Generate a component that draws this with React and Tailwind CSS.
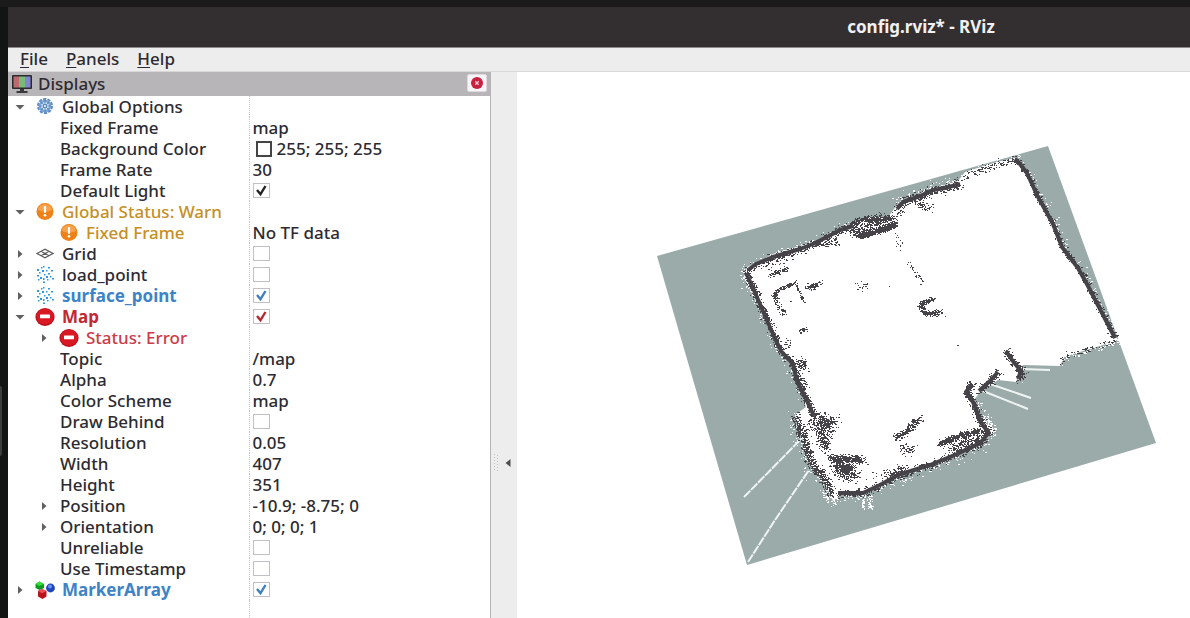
const rows = [
  { name: 'Global Options', depth: 0, open: true, icon: 'gear' },
  { name: 'Fixed Frame', depth: 1, value: 'map' },
  { name: 'Background Color', depth: 1, value: '255; 255; 255', swatch: true },
  { name: 'Frame Rate', depth: 1, value: '30' },
  { name: 'Default Light', depth: 1, check: true },
  { name: 'Global Status: Warn', depth: 0, open: true, icon: 'warn', tone: 'text-[#c58f26]' },
  { name: 'Fixed Frame', depth: 1, icon: 'warn', value: 'No TF data', tone: 'text-[#c58f26]' },
  { name: 'Grid', depth: 0, open: false, icon: 'grid', check: false },
  { name: 'load_point', depth: 0, open: false, icon: 'cloud', check: false },
  { name: 'surface_point', depth: 0, open: false, icon: 'cloud', check: true, tone: 'font-bold text-[#3d83c8]', mark: 'text-[#3d7fc0]' },
  { name: 'Map', depth: 0, open: true, icon: 'error', check: true, tone: 'font-bold text-[#c22a33]', mark: 'text-[#b8282f]' },
  { name: 'Status: Error', depth: 1, open: false, icon: 'error', tone: 'text-[#cb3c48]' },
  { name: 'Topic', depth: 1, value: '/map' },
  { name: 'Alpha', depth: 1, value: '0.7' },
  { name: 'Color Scheme', depth: 1, value: 'map' },
  { name: 'Draw Behind', depth: 1, check: false },
  { name: 'Resolution', depth: 1, value: '0.05' },
  { name: 'Width', depth: 1, value: '407' },
  { name: 'Height', depth: 1, value: '351' },
  { name: 'Position', depth: 1, open: false, value: '-10.9; -8.75; 0' },
  { name: 'Orientation', depth: 1, open: false, value: '0; 0; 0; 1' },
  { name: 'Unreliable', depth: 1, check: false },
  { name: 'Use Timestamp', depth: 1, check: false },
  { name: 'MarkerArray', depth: 0, open: false, icon: 'markers', check: true, tone: 'font-bold text-[#3d83c8]', mark: 'text-[#3d7fc0]' },
];

function GearIcon() {
  return (
    <svg className="size-[18px]" viewBox="0 0 18 18" fill="none" stroke="#5b8bc4">
      <circle cx="9" cy="8" r="7" strokeWidth="2" strokeDasharray="3.2 1.2" />
      <circle cx="9" cy="8" r="5" strokeWidth="2.6" stroke="#7ba3d3" />
      <path d="M9 2v12M3 8h12M4.8 3.8l8.4 8.4M13.2 3.8l-8.4 8.4" strokeWidth="1.2" />
      <circle cx="9" cy="8" r="1.6" fill="#dbe7f5" strokeWidth="1" />
    </svg>
  );
}

function WarnIcon() {
  return (
    <svg className="size-[18px]" viewBox="0 0 18 18">
      <circle cx="9" cy="8.5" r="8.5" fill="#ee8219" />
      <path d="M2 7a7 6 0 0 1 14 0q-7 3-14 0z" fill="#f7a24c" />
      <path d="M9 4v5" stroke="#fff" strokeWidth="2.2" strokeLinecap="round" />
      <circle cx="9" cy="12.2" r="1.3" fill="#fff" />
    </svg>
  );
}

function ErrorIcon() {
  return (
    <svg className="h-[18px] w-5" viewBox="0 0 20 18">
      <ellipse cx="10" cy="9" rx="9.6" ry="8.9" fill="#b90f1b" />
      <ellipse cx="10" cy="8.6" rx="8.6" ry="7.9" fill="#da1824" />
      <rect x="5" y="6.5" width="10" height="3.8" rx="0.6" fill="#fff" />
    </svg>
  );
}

function GridIcon() {
  return (
    <svg className="size-[18px]" viewBox="0 0 18 18" fill="none" stroke="#5d5d5d" strokeWidth="1.2">
      <path d="M1 8.500l8-4.300 8 4.300-8 4.300zM5 6.300l8 4.400M13 6.300l-8 4.400" />
    </svg>
  );
}

function CloudIcon() {
  return (
    <svg className="size-[18px]" viewBox="0 0 18 18" fill="#2c97e8">
      <path d="M1 3h2v2H1zM5 1h1.500v1.500H5zM7 0h1.500v1.500H7zM12 1h2v1.500h-2zM6 4h2v2H6zM10 4h1.500v1.500H10zM15 4h2v1.500h-2zM3 6h1.500v1.500H3zM12 7h2v1.500h-2zM8 8h1.500v1.500H8zM1 9h2v1.500H1zM4 11h2v2H4zM10 10h2v2h-2zM14 10h1.500v1.500H14zM16 12h2v1.500h-2zM7 12h1.500v2H7zM11 13h1.500v1.500H11zM7 15.500h2V17H7zM2 13h1.500v1.500H2z" />
    </svg>
  );
}

function MarkersIcon() {
  return (
    <svg className="h-[18px] w-5" viewBox="0 0 20 18">
      <path d="M0.500 3l4-2.500 4.500 2.500v4L4.500 9 0.500 7z" fill="#0c9a1c" />
      <path d="M0.500 3l4-2.500 4.500 2.500-4.500 2z" fill="#35df3c" />
      <circle cx="15.500" cy="7" r="4.400" fill="#1d45bd" />
      <circle cx="15" cy="5.500" r="2" fill="#6c92ee" />
      <path d="M3 10l4-2 4.500 2v5.500L7.500 18 3 15.500z" fill="#b9141d" />
      <path d="M3 10l4-2 4.500 2-4.500 2.300z" fill="#ef5055" />
    </svg>
  );
}

const icons = {
  gear: GearIcon,
  warn: WarnIcon,
  grid: GridIcon,
  cloud: CloudIcon,
  error: ErrorIcon,
  markers: MarkersIcon,
};

function MonitorIcon() {
  return (
    <svg className="h-[18px] w-5" viewBox="0 0 20 18">
      <rect width="20" height="14" rx="1" fill="#2a2a2e" />
      <path d="M1.500 1.500H7v11H1.500z" fill="#bd6a6e" />
      <path d="M7 1.500h6v11H7z" fill="#78bb78" />
      <path d="M13 1.500h5.500v11H13z" fill="#8184cf" />
      <path d="M8 14h4v2h3.500v2h-11v-2H8z" fill="#3a3a3d" />
    </svg>
  );
}

function Row({ row, id }) {
  const Icon = icons[row.icon];
  const tone = row.tone || 'text-[#2d2b31]';
  return (
    <tr className="h-[21px]">
      <th scope="row" className="border-r border-dotted border-[#c4c4c4] p-0 text-left font-medium">
        <div className={row.depth ? 'flex h-[21px] items-center pl-6' : 'flex h-[21px] items-center'}>
          <span className="mr-1 flex w-6 justify-center">
            {row.open !== undefined && (
              <button type="button" aria-label={`Toggle ${row.name}`} aria-expanded={row.open}>
                <svg className="size-2.5" viewBox="0 0 10 10" fill="#616161">
                  <path d={row.open ? 'M0.500 3h9L5 7.500z' : 'M3 1v8l4.500-4z'} />
                </svg>
              </button>
            )}
          </span>
          {Icon && (
            <span className="mr-2 flex w-[18px] justify-center">
              <span className="shrink-0">
                <Icon />
              </span>
            </span>
          )}
          {row.check !== undefined ? (
            <label htmlFor={id} className={tone}>{row.name}</label>
          ) : (
            <span className={tone}>{row.name}</span>
          )}
        </div>
      </th>
      <td className="p-0 pl-[3px]">
        {row.check !== undefined && (
          <span className="grid w-[17px]">
            <input
              id={id}
              type="checkbox"
              defaultChecked={row.check}
              className="peer col-start-1 row-start-1 h-[15px] w-[17px] appearance-none border border-[#c3c0c5] bg-white"
            />
            <svg
              className={`pointer-events-none invisible col-start-1 row-start-1 h-[15px] w-[17px] peer-checked:visible ${row.mark || 'text-[#242424]'}`}
              viewBox="0 0 17 15"
              fill="none"
              stroke="currentColor"
              strokeWidth="2.4"
            >
              <path d="M4 7l3.500 4.200L12.500 3" />
            </svg>
          </span>
        )}
        {row.value && (
          <span className="flex items-center text-[#2d2b31]">
            {row.swatch && <span className="mr-[5px] ml-[3px] size-4 border-2 border-[#444]" />}
            {row.value}
          </span>
        )}
      </td>
    </tr>
  );
}

function DisplaysPanel() {
  return (
    <section className="w-[483px] shrink-0 border-r border-[#b5b3b5] bg-white">
      <header className="flex h-6 items-center bg-[#b8b5b8] pr-[3px] pl-1">
        <MonitorIcon />
        <h2 className="ml-1.5 flex-1 text-[#2d2b31]">Displays</h2>
        <button type="button" aria-label="Close" className="mb-0.5 flex h-[18px] w-5 items-center justify-center rounded-xs border border-[#dcdadd] bg-[#f6f4f6]">
          <svg className="size-3" viewBox="0 0 12 12">
            <circle cx="6" cy="6" r="6" fill="#c8203f" />
            <path d="M4.300 4.300l3.400 3.400M7.700 4.300l-3.400 3.400" stroke="#f3c9d1" strokeWidth="1.300" />
          </svg>
        </button>
      </header>
      <table className="w-full table-fixed border-collapse">
        <colgroup>
          <col className="w-[241px]" />
          <col />
        </colgroup>
        <tbody>
          {rows.map((row, i) => (
            <Row key={i} row={row} id={`prop-${i}`} />
          ))}
          <tr className="h-[18px]">
            <td className="border-r border-dotted border-[#c4c4c4]" />
            <td />
          </tr>
        </tbody>
      </table>
    </section>
  );
}

function Splitter() {
  return (
    <div className="flex w-[26px] shrink-0 flex-col bg-[#ededed]">
      <div className="grow-[21]" />
      <div className="flex h-5 items-center justify-between pr-1 pl-[3px]">
        <svg className="h-5 w-1" viewBox="0 0 4 20" fill="#c2c2c2">
          <path d="M0 1h1v1H0zM0 4h1v1H0zM0 7h1v1H0zM0 10h1v1H0zM0 13h1v1H0zM0 16h1v1H0zM3 2h1v1H3zM3 5h1v1H3zM3 8h1v1H3zM3 11h1v1H3zM3 14h1v1H3zM3 17h1v1H3z" />
        </svg>
        <button type="button" aria-label="Collapse panel">
          <svg className="size-2.5" viewBox="0 0 10 10" fill="#4f4f4f">
            <path d="M7.500 1v8L2.500 5z" />
          </svg>
        </button>
      </div>
      <div className="grow-[8]" />
    </div>
  );
}

// small seeded generator, so the map is the same on every render
function makeRandom(seed) {
  let s = seed;
  return () => {
    s = (s * 1664525 + 1013904223) % 4294967296;
    return s / 4294967296;
  };
}

// occupancy cells scattered along a polyline: [points, spread, cells per pixel]
function cells(lines, seed) {
  const rnd = makeRandom(seed);
  const jitter = (spread) => (rnd() + rnd() + rnd() - 1.5) * spread;
  let d = '';
  lines.forEach(([pts, spread, density]) => {
    for (let i = 0; i < pts.length - 1; i++) {
      const [x0, y0] = pts[i];
      const [x1, y1] = pts[i + 1];
      const count = Math.round(Math.hypot(x1 - x0, y1 - y0) * density);
      for (let n = 0; n < count; n++) {
        const t = rnd();
        const x = Math.round(x0 + (x1 - x0) * t + jitter(spread));
        const y = Math.round(y0 + (y1 - y0) * t + jitter(spread));
        const w = rnd() < 0.3 ? 2 : 1;
        d += `M${x} ${y}h${w}v1h-${w}z`;
      }
    }
  });
  return d;
}

const topWall = [[748, 270], [756, 264], [773, 257], [800, 249], [813, 244], [827, 237], [840, 230], [853, 226]];
const topRight = [[897, 209], [903, 202], [920, 196], [933, 190], [945, 188], [960, 184]];
const topEdge = [[964, 177], [978, 171], [997, 164], [1015, 160]];
const rightWall = [[1015, 159], [1020, 164], [1027, 173], [1037, 195], [1053, 224], [1062, 247], [1078, 268], [1088, 286], [1101, 311], [1115, 338]];
const leftWall = [[746, 273], [753, 288], [762, 309], [772, 332], [781, 351], [793, 364], [797, 381], [806, 399], [814, 416]];
const leftBulge = [[795, 415], [801, 433], [806, 448], [813, 466], [824, 478], [832, 494]];
const bottomWall = [[838, 493], [863, 493], [880, 485], [898, 475], [930, 465], [957, 454], [980, 443], [989, 433]];
const notch = [[989, 433], [981, 423], [973, 402], [966, 392], [972, 384]];
const diagonal = [[979, 391], [990, 381], [998, 372]];
const spur = [[1006, 351], [1012, 360], [1021, 371], [1018, 379]];
const edge = [[1061, 361], [1064, 356], [1083, 350], [1100, 345], [1115, 341]];

const toPoints = (pts) => pts.map((p) => p.join(',')).join(' ');

const freeArea = [
  [744, 277], [747, 267], [773, 254], [813, 242], [853, 224], [867, 217], [888, 217], [897, 205], [933, 189],
  [958, 181], [965, 172], [997, 162], [1015, 158], [1037, 193], [1067, 253], [1097, 301], [1116, 341], [1083, 351],
  [1064, 357], [1060, 366], [1023, 365], [1016, 382], [998, 380], [980, 392], [974, 400], [982, 421], [995, 430],
  [986, 440], [957, 456], [907, 471], [880, 487], [863, 495], [841, 495], [833, 501], [825, 483], [811, 465],
  [795, 415], [806, 407], [793, 367], [778, 347],
];

const darkCells = cells([
  [topWall, 4, 4], [topRight, 5, 5], [topEdge, 4, 2], [rightWall, 3, 3], [leftWall, 4, 5],
  [leftBulge, 5, 7], [bottomWall, 4, 4], [notch, 4, 6], [diagonal, 4, 5], [spur, 4, 5], [edge, 3, 1],
  [[[852, 233], [872, 222], [892, 219]], 7, 8],
  [[[858, 236], [873, 232], [895, 224]], 3, 12],
  [[[850, 224], [862, 219], [890, 218]], 3, 6],
  [[[766, 265], [790, 257]], 5, 1],
  [[[770, 274], [787, 269]], 3, 4],
  [[[823, 244], [837, 241]], 4, 4],
  [[[772, 296], [779, 289], [796, 282]], 2, 4],
  [[[774, 294], [777, 305], [784, 313]], 3, 3],
  [[[796, 284], [803, 302]], 1, 2],
  [[[807, 287], [816, 285]], 3, 8],
  [[[818, 284], [823, 281]], 2, 1],
  [[[857, 287], [867, 285]], 4, 2],
  [[[799, 331], [807, 329]], 2, 3],
  [[[785, 340], [788, 347]], 4, 2],
  [[[799, 361], [802, 366]], 5, 14],
  [[[797, 375], [804, 388]], 5, 5],
  [[[917, 203], [931, 209]], 4, 3],
  [[[932, 298], [920, 305], [924, 313], [940, 312]], 3, 6],
  [[[895, 234], [901, 247]], 3, 1],
  [[[908, 262], [916, 274], [924, 284]], 2, 1],
  [[[814, 418], [826, 424], [833, 423]], 8, 14],
  [[[820, 434], [826, 448]], 6, 10],
  [[[810, 430], [831, 430]], 7, 4],
  [[[828, 458], [845, 458], [863, 460]], 4, 9],
  [[[836, 464], [852, 474]], 8, 24],
  [[[894, 438], [904, 433], [919, 418]], 4, 6],
  [[[901, 449], [916, 450]], 6, 3],
  [[[890, 475], [905, 468]], 5, 4],
  [[[938, 444], [958, 436], [980, 430]], 3, 8],
  [[[950, 449], [982, 437]], 6, 6],
  [[[1023, 368], [1022, 377]], 4, 2],
  [[[868, 484], [900, 469]], 8, 1],
], 11);

// cleared cells outside the walls
const lightCells = cells([
  [topWall, 6, 1.2], [topRight, 10, 3], [topEdge, 7, 2], [rightWall, 7, 1.2], [leftWall, 7, 1.4],
  [leftBulge, 9, 3], [bottomWall, 9, 2], [notch, 9, 2], [spur, 6, 1], [edge, 5, 2],
  [[[745, 268], [745, 280]], 6, 3],
  [[[983, 417], [995, 431]], 4, 4],
  [[[826, 490], [834, 501]], 6, 5],
  [[[862, 496], [863, 508]], 2, 3],
  [[[869, 496], [870, 508]], 2, 3],
], 29);

const walls = [topWall, topRight, rightWall, leftWall, bottomWall, notch, diagonal, spur];

function MapView() {
  return (
    <main className="min-w-0 flex-1 bg-white">
      <svg className="block w-full" viewBox="517 72 673 546" role="img" aria-label="Occupancy map">
        <path d="M657 256L1048 146L1156 443L747 565z" fill="#9aabaa" />
        <polygon points={toPoints(freeArea)} fill="#fff" />
        <g fill="none" stroke="#eff4f3" strokeWidth="2">
          <path d="M744 497L802 438M748 562L775 520L809 470" strokeDasharray="9 1" />
          <path d="M990 384L1031 398M983 391L1028 409" />
          <path d="M1022 369L1050 370M1098 343L1115 343" />
        </g>
        <path d={lightCells} fill="#fff" shapeRendering="crispEdges" />
        <g fill="none" stroke="#454347" strokeWidth="4" strokeLinejoin="round">
          {walls.map((wall, i) => (
            <polyline key={i} points={toPoints(wall)} />
          ))}
        </g>
        <g fill="#454347" shapeRendering="crispEdges">
          <path d={darkCells} />
          <path d="M957 345h2v1h-2zM889 286h1v1h-1zM945 316h1v1h-1zM790 301h2v1h-2z" />
        </g>
      </svg>
    </main>
  );
}

export default function App() {
  return (
    <div className="flex min-h-screen flex-col bg-[#1c1b1c] pt-[7px] font-['Noto_Sans',sans-serif] text-[17px] leading-5 font-medium">
      <div className="flex flex-1">
        {/* Desktop edge left of the window */}
        <div className="flex w-2 shrink-0 flex-col bg-[#131414]">
          <div className="grow-[70]" />
          <div className="w-0.5 grow-[13] rounded-r-sm bg-[#3c3d3c]" />
          <div className="grow-[30]" />
        </div>

        <div className="flex min-w-0 flex-1 flex-col">
          {/* Title bar */}
          <div className="flex h-[41px] items-center border-b border-[#8d8a8b] bg-[#332f30]">
            <div className="w-[71%]" />
            <h1 className="font-bold whitespace-nowrap text-[#f2f0f0]">config.rviz* - RViz</h1>
          </div>

          {/* Menu bar */}
          <nav className="flex h-6 items-center gap-[18px] border-b border-[#d9d7d7] bg-[#ededed] px-3 pb-0.5 text-[#2d2b31]">
            <button type="button"><u className="underline-offset-2">F</u>ile</button>
            <button type="button"><u className="underline-offset-2">P</u>anels</button>
            <button type="button"><u className="underline-offset-2">H</u>elp</button>
          </nav>

          <div className="flex flex-1">
            <DisplaysPanel />
            <Splitter />
            <MapView />
          </div>
        </div>
      </div>
    </div>
  );
}
